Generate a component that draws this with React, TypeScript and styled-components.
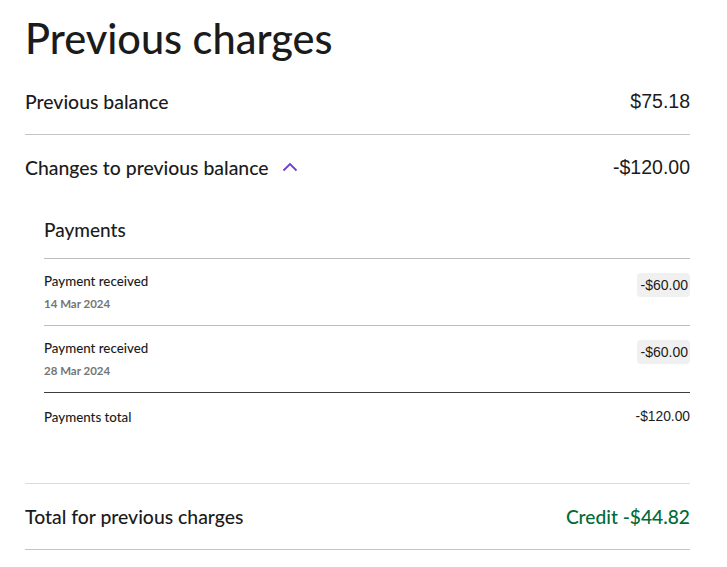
import React from "react";
import styled, { createGlobalStyle } from "styled-components";

const Global = createGlobalStyle`
  html, body { margin: 0; padding: 0; background: #fff; }
  body { font-family: Lato, "Noto Sans", sans-serif; color: #1b1b1b; }
`;

const Page = styled.div`
  padding: 0 37px 0 25px;
`;

const Title = styled.h1`
  margin: 0;
  height: 68px;
  box-sizing: border-box;
  padding-top: 8px;
  display: flex;
  align-items: center;
  font-size: 41.5px;
  font-weight: 500;
  color: #1b1b1b;
`;

const Row = styled.div<{ $h: number; $line?: string }>`
  display: flex;
  align-items: center;
  justify-content: space-between;
  height: ${(p) => p.$h}px;
  border-bottom: ${(p) => (p.$line ? `1px solid ${p.$line}` : "none")};
`;

const Label = styled.div`
  display: flex;
  align-items: center;
  gap: 13px;
  font-size: 19.4px;
  font-weight: 500;
`;

const Amount = styled.div`
  font-family: "Liberation Sans", Arial, sans-serif;
  font-size: 19.5px;
  color: #1b1b1b;
`;

const GreenAmount = styled.div`
  font-size: 19.2px;
  font-weight: 500;
  color: #006b38;
`;

const Section = styled.div`
  padding-left: 19px;
`;

const SectionHead = styled.div`
  height: 58px;
  display: flex;
  align-items: center;
  font-size: 19px;
  font-weight: 500;
  border-bottom: 1px solid #bdbdbd;
  padding-top: 1px;
`;

const Item = styled.div<{ $dark?: boolean }>`
  display: flex;
  justify-content: space-between;
  align-items: flex-start;
  height: 67px;
  box-sizing: border-box;
  padding-top: 14px;
  border-bottom: 1px solid ${(p) => (p.$dark ? "#3d3d3d" : "#bdbdbd")};
`;

const ItemText = styled.div`
  display: flex;
  flex-direction: column;
  gap: 7px;
`;

const ItemTitle = styled.div`
  font-size: 13.3px;
  font-weight: 500;
  line-height: 16px;
`;

const ItemDate = styled.div`
  font-size: 11.5px;
  font-weight: 700;
  color: #757575;
  line-height: 16px;
`;

const Badge = styled.div`
  font-family: "Liberation Sans", Arial, sans-serif;
  font-size: 14px;
  background: #f0f0f0;
  border-radius: 4px;
  padding: 5px 2px 5px 4px;
  line-height: 14px;
`;

const TotalRow = styled.div`
  display: flex;
  justify-content: space-between;
  align-items: center;
  height: 47px;
  font-size: 13.3px;
  font-weight: 500;
`;

const SmallAmount = styled.div`
  font-family: "Liberation Sans", Arial, sans-serif;
  font-size: 13.8px;
`;

const Spacer = styled.div`
  height: 43px;
  border-bottom: 1px solid #dcdcdc;
`;

const Chevron = () => (
  <svg width="16" height="10" viewBox="0 0 16 10" fill="none">
    <path d="M1.5 8.5 L8 2 L14.5 8.5" stroke="#6a3fd6" strokeWidth="1.8" />
  </svg>
);

const payments = [
  { date: "14 Mar 2024", amt: "-$60.00" },
  { date: "28 Mar 2024", amt: "-$60.00" },
];

export default function App() {
  return (
    <Page>
      <Global />
      <Title>Previous charges</Title>
      <Row $h={66} $line="#c4c4c4">
        <Label>Previous balance</Label>
        <Amount>$75.18</Amount>
      </Row>
      <Row $h={64}>
        <Label>
          Changes to previous balance <Chevron />
        </Label>
        <Amount>-$120.00</Amount>
      </Row>
      <Section>
        <SectionHead>Payments</SectionHead>
        {payments.map((p, i) => (
          <Item key={i} $dark={i === payments.length - 1}>
            <ItemText>
              <ItemTitle>Payment received</ItemTitle>
              <ItemDate>{p.date}</ItemDate>
            </ItemText>
            <Badge>{p.amt}</Badge>
          </Item>
        ))}
        <TotalRow>
          <span>Payments total</span>
          <SmallAmount>-$120.00</SmallAmount>
        </TotalRow>
      </Section>
      <Spacer />
      <Row $h={65} $line="#c4c4c4">
        <Label>Total for previous charges</Label>
        <GreenAmount>Credit -$44.82</GreenAmount>
      </Row>
    </Page>
  );
}
